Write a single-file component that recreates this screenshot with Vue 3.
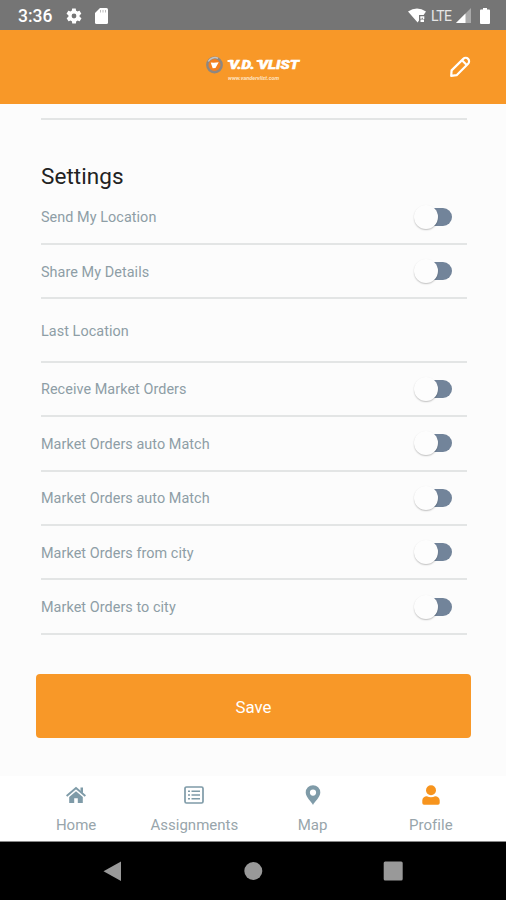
<template>
  <div class="app">
    <div class="status-bar">
      <span class="time">3:36</span>
      <svg class="gear" viewBox="0 0 24 24">
        <path fill="#fff" d="M19.4 13c0-.3.1-.6.1-1s0-.7-.1-1l2.1-1.600c.2-.2.3-.4.1-.6l-2-3.500c-.1-.2-.4-.3-.6-.2l-2.500 1c-.5-.4-1.100-.7-1.700-1l-.4-2.600c0-.2-.2-.4-.5-.4h-4c-.2 0-.5.200-.5.400l-.4 2.600c-.6.300-1.200.600-1.700 1l-2.500-1c-.2-.1-.5 0-.6.200l-2 3.500c-.1.200-.1.400.1.600L4.600 11c-.1.300-.1.700-.1 1s0 .7.100 1l-2.100 1.600c-.2.200-.3.400-.1.600l2 3.500c.1.200.4.300.6.200l2.500-1c.5.400 1.100.7 1.700 1l.4 2.600c0 .300.200.500.500.500h4c.2 0 .5-.2.5-.5l.4-2.600c.6-.3 1.200-.6 1.700-1l2.500 1c.2.100.5 0 .6-.2l2-3.500c.1-.2.100-.4-.1-.6L19.400 13zM12 15.200a3.200 3.200 0 1 1 0-6.400 3.200 3.200 0 0 1 0 6.400z" />
      </svg>
      <svg class="sd" viewBox="0 0 13 16">
        <path fill="#fff" d="M5 0h6.500A1.500 1.500 0 0 1 13 1.500v13a1.500 1.500 0 0 1-1.500 1.500h-10A1.500 1.500 0 0 1 0 14.500V5z" />
        <path stroke="#bbb" stroke-width="1" d="M5.500 2v2.500M8 2v2.500M10.500 2v2.500" />
      </svg>
      <div class="status-right">
        <svg class="wifi" viewBox="0 0 18 15">
          <path fill="#fff" d="M0 3.500Q9-2.500 18 3.500L15.600 7H11v5.500L9.600 14.500z" />
          <path fill="#fff" d="M12.300 8.200h4v2.800h-1.500v-1.300h-1v1h-1.500zM12.500 11.500h3.500v2.500h-3.500z" />
        </svg>
        <span class="lte">LTE</span>
        <svg class="signal" viewBox="0 0 15 15">
          <path fill="#a9a9a9" d="M15 0v15H0z" />
          <path fill="#fff" d="M9.500 5.500V15H0z" />
        </svg>
        <svg class="battery" viewBox="0 0 10 16">
          <path fill="#fff" d="M3 0h4v1.600h2a1 1 0 0 1 1 1V15a1 1 0 0 1-1 1H1a1 1 0 0 1-1-1V2.600a1 1 0 0 1 1-1h2z" />
        </svg>
      </div>
    </div>

    <header class="header">
      <svg class="logo" viewBox="0 0 98 30">
        <circle cx="9.500" cy="10" r="7.200" fill="#f47f20" stroke="#8d8782" stroke-width="2.400" />
        <path d="M3.300 6.500A7.500 7.500 0 0 1 13 3.200" fill="none" stroke="#c9c4c0" stroke-width="1.500" />
        <path d="M5.700 7.500l3 .3 5-.5-3.200 5.700-2.800.2z" fill="#fff" />
        <text class="brand" x="24" y="13.800" textLength="70" lengthAdjust="spacingAndGlyphs">V.D. VLIST</text>
        <path d="M22.500 6h6M51.500 6h6" stroke="#fff" stroke-width="2" />
        <text class="site" x="23" y="24.600" textLength="51" lengthAdjust="spacingAndGlyphs">www.vandervlist.com</text>
      </svg>
      <svg class="pencil" viewBox="0 0 22 22">
        <g fill="none" stroke="#fff" stroke-width="2.200" stroke-linejoin="round">
          <path d="M2.200 19.800l.4-5.400L14.300 2.900a3.300 3.300 0 0 1 4.800 4.800L7.600 19.200z" />
          <path d="M13.200 4.500l4.300 4.300" />
        </g>
      </svg>
    </header>

    <main class="content">
      <div class="top-line"></div>
      <h2 class="title">Settings</h2>
      <div v-for="(item, index) in settings" :key="index" class="row" :class="{ plain: !item.toggle }">
        <span class="label">{{ item.label }}</span>
        <button v-if="item.toggle" class="switch" :class="{ on: item.value }" @click="item.value = !item.value">
          <i class="track"></i>
          <i class="thumb"></i>
        </button>
      </div>
      <button class="save">Save</button>
    </main>

    <nav class="tabs">
      <div v-for="tab in tabs" :key="tab.name" class="tab" :class="{ active: tab.name === current }" @click="current = tab.name">
        <svg v-if="tab.name === 'Home'" viewBox="0 0 20 20">
          <path fill="none" stroke="currentColor" stroke-width="2" d="M.6 11L10 3l9.400 8" />
          <path fill="currentColor" d="M14.500 2.500H17v5.800l-2.500-2zM10 6.200l6.800 5.700v6h-5v-4.700H8.200v4.700h-5v-6z" />
        </svg>
        <svg v-else-if="tab.name === 'Assignments'" viewBox="0 0 20 20">
          <rect x="1" y="2" width="18" height="16" rx="1.500" fill="none" stroke="currentColor" stroke-width="1.700" />
          <path fill="none" stroke="currentColor" stroke-width="1.500" d="M4 6.300h2M7.500 6.300H16M4 10h2M7.500 10H16M4 13.700h2M7.500 13.700H16" />
        </svg>
        <svg v-else-if="tab.name === 'Map'" viewBox="0 0 20 20">
          <path fill="currentColor" fill-rule="evenodd" d="M10 20C8.800 16.800 2.700 12.500 2.700 7.500a7.300 7.300 0 0 1 14.600 0C17.300 12.500 11.200 16.800 10 20zM10 4.500a3.100 3.100 0 1 0 0 6.200 3.100 3.100 0 0 0 0-6.200z" />
        </svg>
        <svg v-else viewBox="0 0 20 20">
          <circle cx="10" cy="5.200" r="5" fill="currentColor" />
          <path fill="currentColor" d="M1.300 18v-2.500c0-2.700 2-4.300 4.600-4.300 2.500 1.300 5.700 1.300 8.200 0 2.600 0 4.600 1.600 4.600 4.300V18q0 1.700-1.700 1.700H3Q1.300 19.700 1.300 18z" />
        </svg>
        <span>{{ tab.name }}</span>
      </div>
    </nav>

    <div class="system-nav">
      <svg viewBox="0 0 20 20"><path d="M.5 10.200L18 .5v19.500z" /></svg>
      <svg viewBox="0 0 20 20"><circle cx="10.300" cy="10" r="9" /></svg>
      <svg viewBox="0 0 20 20"><rect x=".7" y=".5" width="19" height="19" rx="1.500" /></svg>
    </div>
  </div>
</template>

<script setup>
import { ref } from 'vue';

const settings = ref([
  { label: 'Send My Location', toggle: true, value: false },
  { label: 'Share My Details', toggle: true, value: false },
  { label: 'Last Location', toggle: false },
  { label: 'Receive Market Orders', toggle: true, value: false },
  { label: 'Market Orders auto Match', toggle: true, value: false },
  { label: 'Market Orders auto Match', toggle: true, value: false },
  { label: 'Market Orders from city', toggle: true, value: false },
  { label: 'Market Orders to city', toggle: true, value: false },
]);

const tabs = [{ name: 'Home' }, { name: 'Assignments' }, { name: 'Map' }, { name: 'Profile' }];
const current = ref('Profile');
</script>

<style>
body {
  margin: 0;
}
</style>

<style scoped>
.app {
  width: 506px;
  height: 900px;
  display: flex;
  flex-direction: column;
  overflow: hidden;
  background: #fcfcfc;
  font-family: Roboto, "Liberation Sans", sans-serif;
}
button {
  border: none;
  padding: 0;
  font-family: inherit;
}
.status-bar {
  height: 30px;
  flex: none;
  box-sizing: border-box;
  padding: 1px 16px 0 18px;
  display: flex;
  align-items: center;
  background: #757575;
  color: #fff;
}
.time {
  width: 47px;
  font-size: 17.5px;
  font-weight: 500;
}
.gear {
  width: 18px;
  height: 18px;
  margin-right: 12px;
}
.sd {
  width: 13px;
  height: 16px;
}
.status-right {
  margin-left: auto;
  display: flex;
  align-items: center;
}
.wifi {
  width: 18px;
  height: 15px;
}
.lte {
  width: 21px;
  margin: 0 4px 0 5px;
  font-size: 14px;
  letter-spacing: -0.5px;
  color: #e6e6e6;
}
.signal {
  width: 15px;
  height: 15px;
}
.battery {
  width: 10px;
  height: 16px;
  margin-left: 9px;
}
.header {
  height: 74px;
  flex: none;
  box-sizing: border-box;
  padding: 0 35px 0 205px;
  display: flex;
  align-items: center;
  justify-content: space-between;
  background: #f89828;
}
.logo {
  width: 98px;
  height: 30px;
  margin-top: 6px;
}
.brand {
  font: italic 900 12px Roboto, sans-serif;
  fill: #fff;
  stroke: #fff;
  stroke-width: 0.5px;
}
.site {
  font: italic 700 4.5px Roboto, sans-serif;
  fill: #fde3c3;
}
.pencil {
  width: 22px;
  height: 22px;
}
.content {
  height: 672px;
  flex: none;
  box-sizing: border-box;
  padding: 14px 39px 0 41px;
}
.top-line {
  height: 2px;
  background: #e3e5e5;
}
.title {
  height: 70.6px;
  box-sizing: border-box;
  margin: 0;
  padding-top: 42px;
  line-height: 28px;
  font-size: 22.5px;
  font-weight: 400;
  letter-spacing: 0.05px;
  color: #222;
}
.row {
  height: 54.4px;
  box-sizing: border-box;
  display: flex;
  align-items: center;
  justify-content: space-between;
  border-bottom: 2px solid #e3e5e5;
  font-size: 14.4px;
  letter-spacing: 0.06px;
  color: #8e9ea6;
}
.row.plain {
  height: 63.4px;
}
.label {
  padding-top: 2px;
}
.switch {
  width: 39px;
  height: 25px;
  margin-right: 14px;
  display: grid;
  align-items: center;
  background: none;
}
.track,
.thumb {
  grid-area: 1 / 1;
}
.track {
  height: 18px;
  margin: 0 1px 0 6px;
  border-radius: 9px;
  background: #72849a;
}
.thumb {
  z-index: 1;
  width: 24px;
  height: 24px;
  border-radius: 50%;
  background: #fdfdfd;
  box-shadow: 0 1px 1.5px rgba(0, 0, 0, 0.24);
}
.switch.on .thumb {
  margin-left: 15px;
}
.save {
  display: block;
  width: 435px;
  height: 64px;
  margin: 39px 0 0 -5px;
  padding-top: 2px;
  border-radius: 4px;
  background: #f89828;
  color: #fff;
  font-size: 16.8px;
}
.tabs {
  height: 66px;
  flex: none;
  box-sizing: border-box;
  padding: 9px 16px 0 17px;
  display: flex;
  background: #fff;
  border-bottom: 1px solid #888;
}
.tab {
  flex: 1;
  display: flex;
  flex-direction: column;
  align-items: center;
  font-size: 15px;
  line-height: 20px;
  letter-spacing: 0.02px;
  color: #7f9ba8;
}
.tab svg {
  width: 20px;
  height: 20px;
  margin-bottom: 10px;
}
.tab span {
  color: #98a5ab;
}
.tab.active {
  color: #f7941d;
}
.system-nav {
  height: 58px;
  flex: none;
  box-sizing: border-box;
  padding: 0 103px;
  display: flex;
  align-items: center;
  justify-content: space-between;
  background: #000;
}
.system-nav svg {
  width: 20px;
  height: 20px;
  fill: #999;
}
</style>
